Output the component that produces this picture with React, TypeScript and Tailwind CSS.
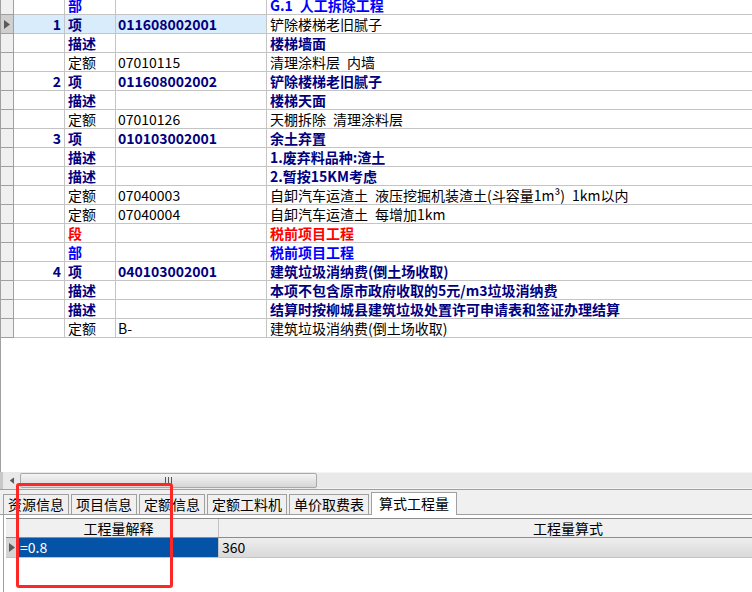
import React from "react";

type Kind = "bu" | "xiang" | "desc" | "de" | "duan";

type Row = {
  num?: string;
  type: string;
  code?: string;
  name: string;
  kind: Kind;
  selected?: boolean;
};

// en space keeps the wide gaps of the original font
const S = "\u2002";

const rows: Row[] = [
  { type: "部", name: `G.1${S}人工拆除工程`, kind: "bu" },
  { num: "1", type: "项", code: "011608002001", name: "铲除楼梯老旧腻子", kind: "xiang", selected: true },
  { type: "描述", name: "楼梯墙面", kind: "desc" },
  { type: "定额", code: "07010115", name: `清理涂料层${S}内墙`, kind: "de" },
  { num: "2", type: "项", code: "011608002002", name: "铲除楼梯老旧腻子", kind: "xiang" },
  { type: "描述", name: "楼梯天面", kind: "desc" },
  { type: "定额", code: "07010126", name: `天棚拆除${S}清理涂料层`, kind: "de" },
  { num: "3", type: "项", code: "010103002001", name: "余土弃置", kind: "xiang" },
  { type: "描述", name: "1.废弃料品种:渣土", kind: "desc" },
  { type: "描述", name: "2.暂按15KM考虑", kind: "desc" },
  { type: "定额", code: "07040003", name: `自卸汽车运渣土${S}液压挖掘机装渣土(斗容量1m³)${S}1km以内`, kind: "de" },
  { type: "定额", code: "07040004", name: `自卸汽车运渣土${S}每增加1km`, kind: "de" },
  { type: "段", name: "税前项目工程", kind: "duan" },
  { type: "部", name: "税前项目工程", kind: "bu" },
  { num: "4", type: "项", code: "040103002001", name: "建筑垃圾消纳费(倒土场收取)", kind: "xiang" },
  { type: "描述", name: "本项不包含原市政府收取的5元/m3垃圾消纳费", kind: "desc" },
  { type: "描述", name: "结算时按柳城县建筑垃圾处置许可申请表和签证办理结算", kind: "desc" },
  { type: "定额", code: "B-", name: "建筑垃圾消纳费(倒土场收取)", kind: "de" },
];

const kindText: Record<Kind, string> = {
  bu: "text-[#0000ff] font-bold",
  xiang: "text-[#000080] font-bold",
  desc: "text-[#000080] font-bold",
  de: "text-black",
  duan: "text-[#ff0000] font-bold",
};

const tabs = ["资源信息", "项目信息", "定额信息", "定额工料机", "单价取费表"];

const Arrow = ({ className }: { className?: string }) => (
  <svg width="6" height="9" viewBox="0 0 6 9" className={className}>
    <path d="M0 0 L6 4.5 L0 9 Z" fill="#5a5a5a" />
  </svg>
);

const GridRow = ({ row }: { row: Row }) => {
  const cell = "h-[19px] border-b border-r border-[#c4c4c4] leading-[18px] whitespace-nowrap overflow-hidden";
  const bg = row.selected ? "bg-[#d9ecfb]" : "bg-white";
  const tone = kindText[row.kind];
  return (
    <div className="flex">
      <div
        className={
          "w-[13px] h-[19px] border-b border-r border-[#a0a0a0] flex items-center justify-center " +
          (row.selected ? "bg-[#cfcfcf]" : "bg-[#f0f0f0]")
        }
      >
        {row.selected ? <Arrow /> : null}
      </div>
      <div className={`${cell} ${bg} w-[51px] text-right pr-[3px] text-[#000080] font-bold`}>{row.num}</div>
      <div className={`${cell} ${bg} w-[51px] pl-[3px] ${tone}`}>{row.type}</div>
      <div className={`${cell} ${bg} w-[151px] pl-[2px] ${tone}`}>{row.code}</div>
      <div
        className={
          "h-[19px] border-b border-[#c4c4c4] leading-[18px] whitespace-nowrap overflow-hidden flex-1 pl-[3px] bg-white " +
          (row.selected ? "text-black pl-[1px]" : tone)
        }
      >
        {row.name}
      </div>
    </div>
  );
};

export default function App() {
  return (
    <div
      className="relative w-[752px] h-[592px] overflow-hidden bg-white text-[14px] text-black"
      style={{ fontFamily: '"Noto Sans CJK SC", "Noto Sans", sans-serif' }}
    >
      {/* main grid */}
      <div className="h-[472px] border-l border-[#a0a0a0] overflow-hidden">
        <div className="-mt-[4px]">
          {rows.map((r, i) => (
            <GridRow key={i} row={r} />
          ))}
        </div>
      </div>

      {/* horizontal scrollbar */}
      <div className="h-[17px] flex bg-[#e9e9e9] border-l-[3px] border-[#c8c8c8]">
        <div className="w-[17px] flex items-center justify-center">
          <Arrow className="rotate-180 scale-75" />
        </div>
        <div className="w-[297px] h-[15px] mt-px rounded-[2px] border border-[#a9a9a9] bg-gradient-to-b from-[#f4f4f4] to-[#d6d6d6] flex items-center justify-center gap-[2px]">
          <div className="w-px h-[7px] bg-[#555]" />
          <div className="w-px h-[7px] bg-[#555]" />
          <div className="w-px h-[7px] bg-[#555]" />
        </div>
        <div className="flex-1 border-t border-b border-[#f4f4f4]" />
      </div>

      {/* tab strip */}
      <div className="h-[26px] border-t border-b border-[#a0a0a0] bg-[#f0f0f0] flex items-end pl-[3px] gap-[2px]">
        {tabs.map((t) => (
          <div
            key={t}
            className="h-[20px] px-[4px] border-t border-l border-r border-[#a0a0a0] leading-[19px] whitespace-nowrap bg-[#f0f0f0]"
          >
            {t}
          </div>
        ))}
        <div className="relative z-10 h-[23px] -mb-px px-[7px] border-t border-l border-r border-[#a0a0a0] bg-white leading-[20px] whitespace-nowrap">
          算式工程量
        </div>
      </div>

      {/* lower panel */}
      <div className="h-[77px] ml-[3px] border-l border-[#a0a0a0] pl-[2px] pt-[3px] bg-white overflow-hidden">
        <div className="flex h-[20px] border-t border-b border-[#8c8c8c] bg-[#f0f0f0] w-[912px]">
          <div className="w-[13px] border-r border-[#c4c4c4]" />
          <div className="w-[200px] border-r border-[#c4c4c4] text-center leading-[18px]">工程量解释</div>
          <div className="w-[698px] text-center leading-[18px]">工程量算式</div>
        </div>
        <div className="flex h-[20px] border-b border-[#c4c4c4] w-[912px]">
          <div className="w-[13px] border-r border-[#a0a0a0] bg-[#d4d4d4] flex items-center justify-center">
            <Arrow />
          </div>
          <div className="w-[200px] bg-[#0453a6] text-white leading-[19px] pl-px border-r border-[#c4c4c4]">=0.8</div>
          <div className="w-[698px] bg-gradient-to-b from-[#eeeeee] to-[#d9d9d9] leading-[19px] pl-[3px]">360</div>
        </div>
      </div>

      {/* red annotation box */}
      <div className="absolute left-[16px] top-[483px] w-[157px] h-[105px] border-[3px] border-[#ff2626] rounded-[3px] pointer-events-none" />
    </div>
  );
}
